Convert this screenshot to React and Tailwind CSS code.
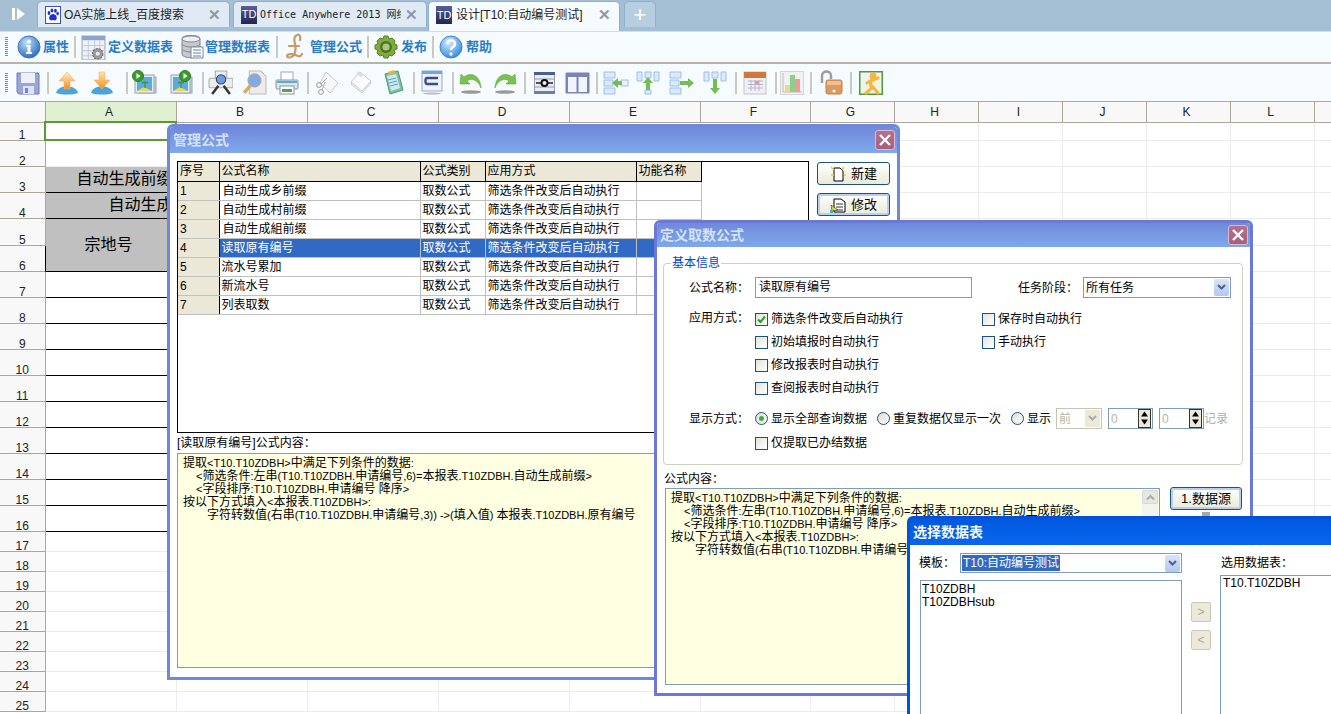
import React from 'react';

const FONT = { fontFamily: '"Liberation Sans","Noto Sans CJK SC",sans-serif' };

/* ---------- small drawings ---------- */
function Ico({ w = 24, h = 24, vb = '0 0 24 24', className = '', children }) {
  return (
    <svg width={w} height={h} viewBox={vb} className={`shrink-0 ${className}`}>
      {children}
    </svg>
  );
}

const InfoIcon = () => (
  <Ico>
    <defs>
      <radialGradient id="gi" cx="40%" cy="30%" r="75%">
        <stop offset="0" stopColor="#bfe0fb" />
        <stop offset="1" stopColor="#2466b8" />
      </radialGradient>
    </defs>
    <circle cx="12" cy="12" r="11" fill="url(#gi)" stroke="#3f78b8" />
    <circle cx="12" cy="6.5" r="2" fill="#fff" />
    <path d="M9.5 10h4v7h1.5v2H9v-2h1.5v-5h-1z" fill="#fff" />
  </Ico>
);

const TableGearIcon = () => (
  <Ico w={25} h={25}>
    <rect x="1" y="1" width="22" height="23" fill="#eef1f6" stroke="#9aa6b8" />
    <rect x="1" y="1" width="22" height="4" fill="#8fa3c8" />
    <path d="M1 10h22M1 15h22M1 20h22M7 5v19M13 5v19M18 5v19" stroke="#c3ccda" />
    <circle cx="16" cy="18" r="5" fill="#9a9a9a" stroke="#666" strokeDasharray="2 1" />
    <circle cx="16" cy="18" r="2" fill="#e8e8e8" />
  </Ico>
);

const DbIcon = () => (
  <Ico>
    <path d="M2 4c0-5 18-5 18 0v15c0 5-18 5-18 0z" fill="#c6c8cc" stroke="#85888f" />
    <ellipse cx="11" cy="4" rx="9" ry="3" fill="#eceef0" stroke="#85888f" />
    <path d="M2 9c2 4 16 4 18 0M2 14c2 4 16 4 18 0" fill="none" stroke="#85888f" />
    <rect x="11" y="12" width="12" height="11" fill="#fff" stroke="#7a8aa8" />
    <path d="M13 15h8M13 18h8M13 21h8" stroke="#5c7fb5" />
  </Ico>
);

const PoundIcon = () => (
  <Ico w={21} h={28} vb="0 0 21 28">
    <path
      d="M15 7c1-4-1-6-3-5-3 1-3 5-2 9 1 5 1 9-2 12-2 2-6 2-6 0 0-3 7-2 11 0 2 1 3 0 4-2M4 13h10"
      fill="none"
      stroke="#c99c67"
      strokeWidth="2.2"
      strokeLinecap="round"
    />
  </Ico>
);

const GearIcon = () => (
  <Ico>
    <path
      d="M10 1h4l1 3 3-1 3 3-1 3 3 1v4l-3 1 1 3-3 3-3-1-1 3h-4l-1-3-3 1-3-3 1-3-3-1v-4l3-1-1-3 3-3 3 1z"
      fill="#7fae35"
      stroke="#55802a"
    />
    <circle cx="12" cy="12" r="6" fill="#4f6f35" />
    <circle cx="12" cy="12" r="3.6" fill="#a9c97a" />
  </Ico>
);

const HelpIcon = () => (
  <Ico>
    <defs>
      <radialGradient id="gh" cx="40%" cy="30%" r="75%">
        <stop offset="0" stopColor="#d6ecff" />
        <stop offset="1" stopColor="#2b86de" />
      </radialGradient>
    </defs>
    <circle cx="12" cy="12" r="11" fill="url(#gh)" stroke="#3c86cf" />
    <path d="M8 9c0-5 8-5 8 0 0 3-4 3-4 6" fill="none" stroke="#fff" strokeWidth="2.6" />
    <circle cx="12" cy="19" r="1.7" fill="#fff" />
  </Ico>
);

const SaveIcon = () => (
  <Ico>
    <path d="M1 2h21l1 1v20H3l-2-2z" fill="#98a4dc" stroke="#7079b5" />
    <rect x="5" y="2" width="14" height="10" fill="#eef0f8" />
    <rect x="7" y="15" width="11" height="8" fill="#dfe2f2" />
    <rect x="9" y="17" width="3" height="5" fill="#7a85c5" />
  </Ico>
);

const ArrowDome = ({ down }) => (
  <Ico>
    <defs>
      <linearGradient id={down ? 'gd' : 'gu'} x1="0" y1="0" x2="0" y2="1">
        <stop offset="0" stopColor={down ? '#fde7a8' : '#fff1c9'} />
        <stop offset="1" stopColor="#f58b1f" />
      </linearGradient>
    </defs>
    <path d="M1 22c2-9 20-9 22 0-6 2-16 2-22 0z" fill="#4aa3dd" />
    <path
      d={down ? 'M9 1h6v8h5l-8 9-8-9h5z' : 'M12 1l8 9h-5v8H9v-8H4z'}
      fill={`url(#${down ? 'gd' : 'gu'})`}
      stroke="#f2b566"
      strokeWidth=".6"
    />
  </Ico>
);

const PicIcon = ({ right }) => (
  <Ico w={26} h={26} vb="0 0 26 26">
    <rect x="7" y="7" width="17" height="16" fill="#c9d2da" stroke="#99a4ad" />
    <rect x="3" y="5" width="19" height="18" fill="#e6eaee" stroke="#9aa5ae" />
    <rect x="5" y="7" width="15" height="14" fill="#55aee0" />
    <path d="M5 21l7-4 8 4z" fill="#f0d35a" />
    <path d="M13 18v-6M13 12l-3 1M13 12l3 1" stroke="#5d8a2e" strokeWidth="1.4" />
    <circle cx={right ? 17 : 6} cy="6" r="5.5" fill="#3b9c2e" stroke="#2b7a22" />
    <path d={right ? 'M15.5 3l4 3-4 3z' : 'M4.5 3l4 3-4 3z'} fill="#fff" />
  </Ico>
);

const PrintPreviewIcon = () => (
  <Ico w={25} h={25}>
    <rect x="7" y="1" width="11" height="10" fill="#f0f0f0" stroke="#aaa" />
    <rect x="1" y="8" width="23" height="9" rx="1" fill="#ececec" stroke="#aaa" />
    <path d="M4 23l6-8M21 23l-6-8" stroke="#333" strokeWidth="2.4" />
    <circle cx="12.5" cy="9" r="4.5" fill="#6b9bea" stroke="#445" />
  </Ico>
);

const FindPageIcon = () => (
  <Ico w={25} h={25}>
    <path d="M7 1h11l5 5v17H7z" fill="#ececec" stroke="#bbb" />
    <circle cx="12" cy="10" r="6" fill="#7fa8ee" stroke="#aaa" strokeWidth="1.6" />
    <path d="M8 15l-6 7" stroke="#d8a860" strokeWidth="3.2" />
  </Ico>
);

const PrinterIcon = () => (
  <Ico>
    <rect x="6" y="1" width="12" height="9" fill="#fff" stroke="#9aa" />
    <rect x="1" y="9" width="22" height="9" rx="1" fill="#dfe3e8" stroke="#8d96a0" />
    <rect x="2" y="10" width="20" height="2" fill="#4db0e0" />
    <rect x="5" y="15" width="14" height="8" fill="#fff" stroke="#8d96a0" />
    <rect x="7" y="18" width="10" height="3" fill="#57a05a" />
  </Ico>
);

const CutIcon = () => (
  <Ico>
    <path d="M11 1l12 11-8 10L5 12z" fill="#f7f7f7" stroke="#c8c8c8" />
    <circle cx="4" cy="14" r="2.4" fill="none" stroke="#999" />
    <circle cx="6" cy="21" r="2.4" fill="none" stroke="#999" />
    <path d="M6 13l6-6M7 19l3-8" stroke="#aaa" />
  </Ico>
);

const CopyIcon = () => (
  <Ico>
    <path d="M11 3l11 9-9 10L2 13z" fill="#f6f6f6" stroke="#c8c8c8" />
    <path d="M11 1l11 9-9 10L2 11z" fill="#fbfbfb" stroke="#c8c8c8" />
    <rect x="8" y="2" width="6" height="3" fill="#ddd" transform="rotate(40 11 3)" />
  </Ico>
);

const ClipIcon = () => (
  <Ico w={21} h={25} vb="0 0 21 25">
    <path d="M2 4l13-3 5 19-13 4z" fill="#7fc39a" stroke="#4a9a70" />
    <path d="M4 6l9-2 4 14-9 3z" fill="#cfe8f5" />
    <path d="M5 10l8-2M6 13l8-2M7 16l8-2" stroke="#5a9ad5" />
    <rect x="5" y="1" width="7" height="3" fill="#e2b64a" transform="rotate(-14 8 2)" />
  </Ico>
);

const WrapIcon = () => (
  <Ico w={22} h={25} vb="0 0 22 25">
    <rect x="1" y="1" width="20" height="20" fill="#eef2fa" stroke="#9aa8c8" />
    <rect x="1" y="1" width="20" height="3" fill="#6ea4ea" />
    <path d="M17 8H6c-2 0-2 6 0 6h11" fill="none" stroke="#3d4d85" strokeWidth="2.4" />
    <ellipse cx="11" cy="23.5" rx="9" ry="1" fill="#bbb" />
  </Ico>
);

const TurnIcon = ({ flip }) => (
  <Ico className={flip ? '-scale-x-100' : ''}>
    <path d="M22 17C19 8 11 7 8 10l3 3-10 0 1-10 3 3c6-5 16-3 17 11z" fill="#7cc04f" stroke="#5ea238" strokeWidth=".6" />
    <ellipse cx="12" cy="21" rx="10" ry="1.8" fill="#999" />
  </Ico>
);

const CellAIcon = () => (
  <Ico w={21} h={22} vb="0 0 21 22">
    <rect x="0" y="0" width="21" height="22" fill="#e8ecf4" stroke="#555" />
    <rect x="0" y="0" width="21" height="3" fill="#4a5f8f" />
    <rect x="0" y="19" width="21" height="3" fill="#6b7ea8" />
    <path d="M0 7h21M0 15h21" stroke="#99a" />
    <path d="M2 11h5M14 11h5" stroke="#222" strokeWidth="1.5" />
    <circle cx="10.5" cy="11" r="3" fill="none" stroke="#111" strokeWidth="2" />
  </Ico>
);

const TwoColsIcon = () => (
  <Ico w={25} h={22} vb="0 0 25 22">
    <rect x=".5" y=".5" width="24" height="21" fill="#7d83b5" rx="1" />
    <rect x="3" y="5" width="8.5" height="15" fill="#f2f4fb" />
    <rect x="13.5" y="5" width="8.5" height="15" fill="#f2f4fb" />
  </Ico>
);

const MergeIcon = ({ dir }) => {
  if (dir === 'up' || dir === 'down') {
    return (
      <Ico>
        <path d="M1 1h5v9H1zM9 1h6v6H9zM18 1h5v9h-5z" fill="#dbe9fa" stroke="#9cc0ea" />
        <path d="M9 19h6v4H9z" fill={dir === 'up' ? '#dbe9fa' : 'none'} stroke={dir === 'up' ? '#9cc0ea' : 'none'} />
        <path d={dir === 'up' ? 'M12 6l5 6h-3v7h-4v-7H7z' : 'M10 8h4v9h3l-5 6-5-6h3z'} fill="#73bd55" />
      </Ico>
    );
  }
  return (
    <Ico w={26} h={24} vb="0 0 26 24">
      <path d="M1 1h11v6H1zM1 9h9v6H1zM1 17h11v6H1z" fill="#dbe9fa" stroke="#9cc0ea" />
      {dir === 'left' && <path d="M18 9h7v6h-7z" fill="#eaf2fc" stroke="#9cc0ea" />}
      <path d={dir === 'left' ? 'M9 12l6-5v3h4v4h-4v3z' : 'M11 10h8V7l6 5-6 5v-3h-8z'} fill="#73bd55" />
    </Ico>
  );
};

const CalendarIcon = () => (
  <Ico>
    <rect x="1" y="1" width="22" height="22" fill="#f0f0f2" stroke="#c4c4c8" />
    <rect x="1" y="1" width="22" height="6" fill="#d2763a" />
    <path d="M5 10h15M5 13.5h15M5 17h15M8 9v11M12 9v11M16 9v11" stroke="#b3b8d6" />
    <rect x="12" y="10" width="4" height="3.5" fill="#ee9a80" />
  </Ico>
);

const ChartIcon = () => (
  <Ico>
    <rect x=".5" y=".5" width="23" height="23" fill="#f2f2f2" stroke="#d5d5d5" />
    <path d="M3 2v19h19" stroke="#bbb" fill="none" />
    <rect x="5" y="14" width="5" height="7" fill="#f3d48c" />
    <rect x="10" y="4" width="5" height="17" fill="#8bd08b" />
    <rect x="15" y="8" width="5" height="13" fill="#ee9a9a" />
  </Ico>
);

const LockIcon = () => (
  <Ico w={23} h={25} vb="0 0 23 25">
    <path d="M2 13V6c0-6 9-6 9 0v3" fill="none" stroke="#9c9c9c" strokeWidth="2.4" />
    <rect x="6" y="10" width="16" height="14" rx="2" fill="#dd9a5e" stroke="#c47f45" />
    <rect x="7" y="11" width="14" height="4" rx="1" fill="#f0c094" />
    <circle cx="14" cy="21" r="1.5" fill="#fff" />
  </Ico>
);

const RunnerIcon = () => (
  <Ico>
    <rect x=".5" y=".5" width="23" height="23" fill="#eef4ec" stroke="#4f9a3d" strokeWidth="2" />
    <circle cx="14" cy="5" r="3.4" fill="#f5b83c" />
    <path d="M13 8c-2 4-2 7 0 9l-6 5M13 15l6 7M13 9l-5 3M14 9l5-2" fill="none" stroke="#f5b83c" strokeWidth="3.2" strokeLinecap="round" />
  </Ico>
);

const Sep = ({ className }) => <span className={`block w-[2px] h-[22px] bg-[#c9c9c0] shrink-0 ${className}`} />;

const Grip = ({ className }) => (
  <span className={`block w-[3px] h-[20px] shrink-0 bg-[repeating-linear-gradient(to_bottom,#8a8a70_0,#8a8a70_1px,transparent_1px,transparent_2px)] ${className}`} />
);

/* ---------- top bars ---------- */
function Tab({ active, icon, mono, w, children }) {
  return (
    <div
      className={`relative flex items-center shrink-0 rounded-t-[5px] border border-b-0 border-[#8fb0cb] pl-[7px] ${w} ${
        active ? 'h-[30px] bg-[#f5fbff] pb-[3px]' : 'h-[26px] bg-[#dfeaf5]'
      }`}
    >
      {icon}
      <span className={`ml-[3px] whitespace-nowrap overflow-hidden text-[#222] ${mono ? 'w-[141px] text-[10px]' : 'text-[12px]'}`} style={mono ? { fontFamily: '"DejaVu Sans Mono","Noto Sans CJK SC",monospace' } : undefined}>
        {children}
      </span>
      <span className="absolute right-[8px] top-[5px] text-[15px] leading-[15px] font-bold text-[#8b98a5]">✕</span>
    </div>
  );
}

const PawBadge = () => (
  <Ico w={16} h={18} vb="0 0 16 18">
    <rect x=".5" y=".5" width="15" height="17" fill="#fff" stroke="#3a50c8" />
    <g fill="#1f2fd0">
      <ellipse cx="4" cy="7" rx="1.4" ry="2" />
      <ellipse cx="7" cy="4.6" rx="1.4" ry="2" />
      <ellipse cx="10.4" cy="4.8" rx="1.4" ry="2" />
      <ellipse cx="12.6" cy="7.6" rx="1.3" ry="1.8" />
      <path d="M8 8c-3 0-5 4-3 6 1 1 2 0 3 0s2 1 3 0c2-2 0-6-3-6z" />
    </g>
  </Ico>
);

const TdBadge = () => (
  <span className="flex items-center justify-center w-[16px] h-[18px] shrink-0 bg-gradient-to-b from-[#5a5f9a] to-[#20264f] text-[11px] leading-none text-white">TD</span>
);

function TabBar() {
  return (
    <div className="flex items-start h-[31px] pt-px bg-[#a4bed4] shrink-0">
      <div className="flex items-center justify-center w-[37px] h-[26px] text-white">
        <Ico w={16} h={16} vb="0 0 16 16">
          <path d="M1 2h3v12H1zM6 2l8 6-8 6z" fill="#fff" />
        </Ico>
      </div>
      <Tab icon={<PawBadge />} w="w-[193px]">OA实施上线_百度搜索</Tab>
      <div className="w-[3px]" />
      <Tab icon={<TdBadge />} mono w="w-[194px]">Office Anywhere 2013 网络</Tab>
      <div className="w-px" />
      <Tab active icon={<TdBadge />} w="w-[192px]">
        <span className="ml-px">设计[T10:自动编号测试]</span>
      </Tab>
      <div className="flex items-center justify-center w-[32px] h-[26px] ml-[4px] rounded-t-[5px] border border-b-0 border-[#8fb0cb] bg-[#b7cde0] text-[22px] leading-none text-white">+</div>
    </div>
  );
}

function MenuItem({ icon, iconClass, label, labelClass }) {
  return (
    <>
      <span className={iconClass}>{icon}</span>
      <span className={`text-[13px] font-bold text-[#2a7bc8] whitespace-nowrap ${labelClass}`}>{label}</span>
    </>
  );
}

function MenuBar() {
  return (
    <div className="flex items-center h-[33px] shrink-0 border-t border-b-2 border-t-[#dcdcdc] border-b-[#b5b5ac] bg-[#f5fbff] pl-[5px]">
      <Grip />
      <MenuItem icon={<InfoIcon />} iconClass="ml-[9px]" label="属性" labelClass="ml-[2px]" />
      <Sep className="ml-[5px]" />
      <MenuItem icon={<TableGearIcon />} iconClass="ml-[5px]" label="定义数据表" labelClass="ml-[2px]" />
      <MenuItem icon={<DbIcon />} iconClass="ml-[7px]" label="管理数据表" labelClass="ml-[1px]" />
      <Sep className="ml-[6px]" />
      <MenuItem icon={<PoundIcon />} iconClass="ml-[7px]" label="管理公式" labelClass="ml-[4px]" />
      <Sep className="ml-[5px]" />
      <MenuItem icon={<GearIcon />} iconClass="ml-[5px]" label="发布" labelClass="ml-[3px]" />
      <Sep className="ml-[5px]" />
      <MenuItem icon={<HelpIcon />} iconClass="ml-[5px]" label="帮助" labelClass="ml-[3px]" />
    </div>
  );
}

function ToolBar() {
  return (
    <div className="flex items-center h-[38px] shrink-0 border-b border-[#aca899] bg-[#f5fbff] pl-[5px]">
      <Grip />
      <span className="ml-[8px]"><SaveIcon /></span>
      <Sep className="ml-[7px]" />
      <span className="ml-[6px]"><ArrowDome /></span>
      <span className="ml-[11px]"><ArrowDome down /></span>
      <Sep className="ml-[12px]" />
      <span className="ml-[4px]"><PicIcon /></span>
      <span className="ml-[10px]"><PicIcon right /></span>
      <Sep className="ml-[8px]" />
      <span className="ml-[4px]"><PrintPreviewIcon /></span>
      <span className="ml-[9px]"><FindPageIcon /></span>
      <span className="ml-[8px]"><PrinterIcon /></span>
      <Sep className="ml-[8px]" />
      <span className="ml-[6px]"><CutIcon /></span>
      <span className="ml-[10px]"><CopyIcon /></span>
      <span className="ml-[10px]"><ClipIcon /></span>
      <Sep className="ml-[9px]" />
      <span className="ml-[6px]"><WrapIcon /></span>
      <Sep className="ml-[9px]" />
      <span className="ml-[5px]"><TurnIcon /></span>
      <span className="ml-[10px]"><TurnIcon flip /></span>
      <Sep className="ml-[7px]" />
      <span className="ml-[8px]"><CellAIcon /></span>
      <span className="ml-[10px]"><TwoColsIcon /></span>
      <Sep className="ml-[6px]" />
      <span className="ml-[5px]"><MergeIcon dir="left" /></span>
      <span className="ml-[7px]"><MergeIcon dir="up" /></span>
      <span className="ml-[9px]"><MergeIcon dir="right" /></span>
      <span className="ml-[8px]"><MergeIcon dir="down" /></span>
      <Sep className="ml-[8px]" />
      <span className="ml-[6px]"><CalendarIcon /></span>
      <Sep className="ml-[8px]" />
      <span className="ml-[3px]"><ChartIcon /></span>
      <Sep className="ml-[6px]" />
      <span className="ml-[8px]"><LockIcon /></span>
      <Sep className="ml-[7px]" />
      <span className="ml-[7px]"><RunnerIcon /></span>
    </div>
  );
}

/* ---------- spreadsheet behind the windows ---------- */
const COLS = ['A', 'B', 'C', 'D', 'E', 'F', 'G', 'H', 'I', 'J', 'K', 'L'];
const ROWS = Array.from({ length: 25 }, (_, i) => i + 1);

const cellLine = 'border border-[#ececec]';
const rowHead = 'border border-l-0 border-[#aca899] bg-[#f8f8f8] text-center align-bottom text-[12px] leading-[10px] text-[#222]';

function mergedCell(n) {
  if (n === 3) return <td colSpan={2} className="border border-black bg-[#c0c0c0] pl-[31px] text-[16px] whitespace-nowrap overflow-hidden">自动生成前缀</td>;
  if (n === 4) return <td colSpan={2} className="border border-black bg-[#c0c0c0] pl-[63px] text-[16px] whitespace-nowrap overflow-hidden">自动生成</td>;
  if (n === 5) return <td colSpan={2} rowSpan={2} className="border border-black bg-[#c0c0c0] pl-[39px] text-[16px]">宗地号</td>;
  if (n === 6) return null;
  return <td colSpan={2} className="border border-black" />;
}

function rowHeight(n) {
  if (n === 1) return 'h-[18px]';
  if (n === 5) return 'h-[27px]';
  return n <= 16 ? 'h-[26px]' : 'h-[20px]';
}

function Sheet() {
  return (
    <table className="table-fixed border-collapse w-[1331px] text-black">
      <colgroup>
        <col className="w-[45px]" />
        <col className="w-[131px]" />
        <col className="w-[131px]" />
        <col className="w-[131px]" />
        <col className="w-[131px]" />
        <col className="w-[131px]" />
        <col className="w-[110px]" />
        <col className="w-[84px]" />
        <col className="w-[84px]" />
        <col className="w-[84px]" />
        <col className="w-[84px]" />
        <col className="w-[84px]" />
        <col className="w-[84px]" />
        <col className="w-[17px]" />
      </colgroup>
      <tbody>
        <tr className="h-[20px]">
          <td className="border border-t-0 border-l-0 border-[#aca899] bg-[#f8f8f8]" />
          {COLS.map((c) => (
            <td
              key={c}
              className={`border border-t-0 border-[#aca899] pr-[3px] text-center text-[12px] text-[#222] ${c === 'A' ? 'bg-[#e0f0d0]' : 'bg-[#f8f8f8]'}`}
            >
              {c}
            </td>
          ))}
          <td className="border border-t-0 border-[#aca899] bg-[#f8f8f8]" />
        </tr>
        {ROWS.map((n) => (
          <tr key={n} className={rowHeight(n)}>
            <td className={`${rowHead} ${n === 1 ? 'bg-[#e0f0d0]' : ''}`}>{n}</td>
            {n === 1 ? (
              <>
                <td className="border-2 border-[#5a9a32]" />
                <td className={cellLine} />
              </>
            ) : n === 2 || n > 16 ? (
              <>
                <td className={cellLine} />
                <td className={cellLine} />
              </>
            ) : (
              mergedCell(n)
            )}
            {COLS.slice(2).map((c) => (
              <td key={c} className={cellLine} />
            ))}
            <td className={cellLine} />
          </tr>
        ))}
      </tbody>
    </table>
  );
}

/* ---------- dialog parts ---------- */
function CloseBtn() {
  return (
    <span className="flex items-center justify-center w-[20px] h-[20px] rounded-[3px] border border-[#d6bcd0] bg-gradient-to-b from-[#b8708a] to-[#a85f7c]">
      <Ico w={12} h={12} vb="0 0 12 12">
        <path d="M1 1l10 10M11 1L1 11" stroke="#fff" strokeWidth="2.4" />
      </Ico>
    </span>
  );
}

function TitleBar({ title, h, xp }) {
  return (
    <div className={`flex items-center justify-between shrink-0 pl-[3px] pr-[2px] ${h} ${xp ? 'bg-gradient-to-b from-[#0058e0] to-[#0a66ee]' : 'bg-gradient-to-b from-[#7089dc] to-[#7fa8ea]'}`}>
      <span className={`text-[14px] font-bold ${xp ? 'text-[#f2f6ff]' : 'text-[#d4e2f8]'}`}>{title}</span>
      {!xp && <CloseBtn />}
    </div>
  );
}

function XpButton({ icon, children, className = '' }) {
  return (
    <button className={`flex items-center justify-center gap-[5px] rounded-[3px] border border-[#1c5180] bg-gradient-to-b from-white to-[#ece9d8] text-[13px] text-black ${className}`}>
      {icon}
      {children}
    </button>
  );
}

const NewDocIcon = () => (
  <Ico w={16} h={16} vb="0 0 16 16">
    <path d="M4 2h6l3 3v10H4z" fill="#fff" stroke="#000" />
    <path d="M1 1l3 3M14 1l-2 3M1 9h3M14 9h2" stroke="#f0d020" strokeWidth="1.4" />
  </Ico>
);

const EditDocIcon = () => (
  <Ico w={16} h={16} vb="0 0 16 16">
    <path d="M4 2h7l4 3v10H4z" fill="#fff" stroke="#000" />
    <path d="M6 7h7M6 10h7M6 13h7" stroke="#333" />
    <path d="M1 8l7 5-6 1z" fill="#f0d020" stroke="#333" strokeWidth=".6" />
    <path d="M0 13h3v3H0z" fill="#40b0d0" />
  </Ico>
);

const Chk = ({ checked }) => (
  <span className="flex items-center justify-center w-[13px] h-[13px] shrink-0 border border-[#1c5180] bg-gradient-to-br from-[#e4e3da] to-white">
    {checked && (
      <Ico w={9} h={9} vb="0 0 9 9">
        <path d="M1 4.5l2.5 2.5L8 1.5" fill="none" stroke="#21a121" strokeWidth="2" />
      </Ico>
    )}
  </span>
);

const Radio = ({ on }) => (
  <span className="flex items-center justify-center w-[13px] h-[13px] shrink-0 rounded-full border border-[#1c5180] bg-gradient-to-br from-[#dcdcd4] to-white">
    {on && <span className="block w-[5px] h-[5px] rounded-full bg-[#3fae3f]" />}
  </span>
);

const DropArrow = () => (
  <span className="flex items-center justify-center w-[15px] h-[17px] rounded-[2px] bg-gradient-to-b from-[#d8e4fb] to-[#b1c8f2]">
    <Ico w={9} h={7} vb="0 0 9 7">
      <path d="M1 1l3.5 3.5L8 1" fill="none" stroke="#4d6185" strokeWidth="2" />
    </Ico>
  </span>
);

const Spin = () => (
  <div className="flex items-center justify-between w-[45px] h-[21px] border border-[#7f9db9] bg-white pl-[2px] pr-px text-[12px] text-[#b4b4a8]">
    0
    <span className="flex flex-col w-[13px] h-[19px] border border-[#333] bg-[#ece9d8]">
      <Ico w={11} h={8} vb="0 0 11 8"><path d="M5.5 1.5l3.5 5H2z" fill="#000" /></Ico>
      <Ico w={11} h={8} vb="0 0 11 8"><path d="M5.5 6.5l3.5-5H2z" fill="#000" /></Ico>
    </span>
  </div>
);

const Opt = ({ w, checked, children }) => (
  <label className={`flex items-center gap-[3px] whitespace-nowrap ${w}`}>
    <Chk checked={checked} />
    {children}
  </label>
);

// latin runs in the formula are a size smaller than the chinese around them
const L = ({ children }) => <span className="text-[11px]">{children}</span>;

function FormulaText() {
  return (
    <div className="text-[12px] leading-[13px] text-black whitespace-nowrap">
      <div>提取<L>&lt;T10.T10ZDBH&gt;</L>中满足下列条件的数据<L>:</L></div>
      <div className="pl-[13px]"><L>&lt;</L>筛选条件<L>:</L>左串<L>(T10.T10ZDBH.</L>申请编号<L>,6)=</L>本报表<L>.T10ZDBH.</L>自动生成前缀<L>&gt;</L></div>
      <div className="pl-[13px]"><L>&lt;</L>字段排序<L>:T10.T10ZDBH.</L>申请编号 降序<L>&gt;</L></div>
      <div>按以下方式填入<L>&lt;</L>本报表<L>.T10ZDBH&gt;:</L></div>
      <div className="pl-[24px]">字符转数值<L>(</L>右串<L>(T10.T10ZDBH.</L>申请编号<L>,3)) -&gt;(</L>填入值<L>) </L>本报表<L>.T10ZDBH.</L>原有编号</div>
    </div>
  );
}

/* ---------- 管理公式 ---------- */
const FORMULAS = [
  ['自动生成乡前缀', 1],
  ['自动生成村前缀', 1],
  ['自动生成組前缀', 1],
  ['读取原有编号', 0],
  ['流水号累加', 0],
  ['新流水号', 0],
  ['列表取数', 0],
];

const thCls = 'border border-black bg-[#ebe8d8] pl-[2px] text-left font-normal whitespace-nowrap';

function ManageWindow() {
  return (
    <div className="absolute left-[167px] top-[124px] flex flex-col w-[733px] h-[556px] rounded-t-[6px] border-[3px] border-[#7088dc] bg-white overflow-hidden text-[12px]">
      <TitleBar title="管理公式" h="h-[26px]" />
      <div className="flex gap-[8px] pl-[7px] pt-[8px]">
        <div className="w-[632px] h-[272px] border border-black bg-white">
          <table className="table-fixed border-collapse w-[523px] leading-[18px]">
            <colgroup>
              <col className="w-[41px]" />
              <col className="w-[201px]" />
              <col className="w-[65px]" />
              <col className="w-[151px]" />
              <col className="w-[65px]" />
            </colgroup>
            <tbody>
              <tr className="h-[19px]">
                <td className={`${thCls} border-t-0 border-l-0`}>序号</td>
                <td className={`${thCls} border-t-0`}>公式名称</td>
                <td className={`${thCls} border-t-0`}>公式类别</td>
                <td className={`${thCls} border-t-0`}>应用方式</td>
                <td className={`${thCls} border-t-0`}>功能名称</td>
              </tr>
              {FORMULAS.map(([name, indent], i) => {
                const sel = i === 3;
                const td = `border border-[#c0c0c0] pl-[2px] whitespace-nowrap overflow-hidden ${sel ? 'bg-[#316ac5] text-white' : ''}`;
                return (
                  <tr key={name} className="h-[19px]">
                    <td className="border border-l-0 border-[#c0c0c0] border-r-black bg-[#ebe8d8] pl-[2px]">{i + 1}</td>
                    <td className={`${td} ${indent ? 'pl-[3px]' : ''}`}>{name}</td>
                    <td className={td}>取数公式</td>
                    <td className={td}>筛选条件改变后自动执行</td>
                    <td className={td} />
                  </tr>
                );
              })}
            </tbody>
          </table>
        </div>
        <div className="flex flex-col gap-[8px] pt-px">
          <XpButton icon={<NewDocIcon />} className="w-[73px] h-[23px]">新建</XpButton>
          <XpButton icon={<EditDocIcon />} className="w-[73px] h-[23px] shadow-[inset_0_0_0_2px_#b8d0f0]">修改</XpButton>
        </div>
      </div>
      <div className="pl-[7px] mt-[2px] h-[18px] leading-[17px] text-black">[读取原有编号]公式内容：</div>
      <div className="ml-[7px] w-[713px] h-[215px] border border-[#7f9db9] bg-[#ffffe1] pl-[5px] pt-[3px]">
        <FormulaText />
      </div>
    </div>
  );
}

/* ---------- 定义取数公式 ---------- */
function DefineWindow() {
  return (
    <div className="absolute left-[654px] top-[220px] flex flex-col w-[599px] h-[476px] rounded-t-[6px] border-[3px] border-[#6a78d8] bg-white overflow-hidden text-[12px] text-black">
      <TitleBar title="定义取数公式" h="h-[24px]" />
      <fieldset className="ml-[6px] mt-[9px] w-[580px] h-[209px] rounded-[4px] border border-[#d0d0bf]">
        <legend className="ml-[7px] px-px text-[12px] leading-[14px] text-[#0046d5]">基本信息</legend>
        <div className="flex items-center h-[21px] mt-[7px] pl-[25px]">
          <span className="w-[66px]">公式名称：</span>
          <div className="w-[217px] h-[21px] border border-[#7f9db9] pl-[3px] leading-[19px]">读取原有编号</div>
          <span className="ml-[46px] w-[65px]">任务阶段：</span>
          <div className="flex items-center justify-between w-[148px] h-[21px] border border-[#7f9db9] pl-[2px] pr-px">
            所有任务
            <DropArrow />
          </div>
        </div>
        <div className="flex mt-[12px] pl-[25px]">
          <span className="w-[66px] leading-[17px]">应用方式：</span>
          <div className="flex flex-col gap-[5px] w-[227px]">
            <Opt w="h-[18px]" checked>筛选条件改变后自动执行</Opt>
            <Opt w="h-[18px]">初始填报时自动执行</Opt>
            <Opt w="h-[18px]">修改报表时自动执行</Opt>
            <Opt w="h-[18px]">查阅报表时自动执行</Opt>
          </div>
          <div className="flex flex-col gap-[5px]">
            <Opt w="h-[18px]">保存时自动执行</Opt>
            <Opt w="h-[18px]">手动执行</Opt>
          </div>
        </div>
        <div className="flex items-center h-[21px] mt-[11px] pl-[25px]">
          <span className="w-[66px]">显示方式：</span>
          <label className="flex items-center gap-[3px] w-[122px]"><Radio on />显示全部查询数据</label>
          <label className="flex items-center gap-[3px] w-[134px] whitespace-nowrap"><Radio />重复数据仅显示一次</label>
          <label className="flex items-center gap-[3px] w-[45px]"><Radio />显示</label>
          <div className="flex items-center justify-between w-[46px] h-[21px] border border-[#c4c4b4] bg-white pl-[2px] pr-px text-[#b4b4a8]">
            前
            <span className="flex items-center justify-center w-[15px] h-[17px] bg-[#ece9d8]">
              <Ico w={9} h={7} vb="0 0 9 7"><path d="M1 1l3.5 3.5L8 1" fill="none" stroke="#aaa" strokeWidth="2" /></Ico>
            </span>
          </div>
          <div className="w-[6px]" />
          <Spin />
          <div className="w-[6px]" />
          <Spin />
          <span className="text-[#b0b0a4]">记录</span>
        </div>
        <div className="mt-[5px] pl-[91px]">
          <Opt w="h-[18px]">仅提取已办结数据</Opt>
        </div>
      </fieldset>
      <div className="ml-[7px] mt-[6px] h-[17px] leading-[17px]">公式内容：</div>
      <div className="flex">
        <div className="relative ml-[8px] w-[495px] h-[197px] border border-[#7f9db9] bg-[#ffffe1] pl-[5px] pt-[3px] overflow-hidden">
          <FormulaText />
          <div className="absolute right-px top-px w-[16px] h-[32px] bg-[#f4f4ee]">
            <span className="flex items-center justify-center h-[14px] rounded-[2px] border border-[#d0d8e8] bg-[#e6e8dc]">
              <Ico w={9} h={7} vb="0 0 9 7"><path d="M1 5.5L4.5 2 8 5.5" fill="none" stroke="#a8acb0" strokeWidth="2" /></Ico>
            </span>
          </div>
        </div>
        <div className="flex flex-col items-center ml-[10px] -mt-px w-[72px]">
          <XpButton className="w-[72px] h-[23px] shadow-[inset_0_0_0_2px_#b8d0f0] text-[12px]">1.数据源</XpButton>
          <span className="block w-[8px] h-[5px] mt-[2px] bg-[#a8a8a8]" />
        </div>
      </div>
    </div>
  );
}

/* ---------- 选择数据表 ---------- */
function PickWindow() {
  return (
    <div className="absolute left-[907px] top-[516px] flex flex-col w-[440px] h-[220px] border-[3px] border-[#0052d9] rounded-t-[6px] bg-white text-[12px] text-black">
      <TitleBar title="选择数据表" h="h-[26px]" xp />
      <div className="flex pl-[10px] pt-[8px]">
        <div className="w-[262px] shrink-0">
          <div className="flex items-center justify-between h-[20px]">
            <span className="-ml-px">模板：</span>
            <div className="flex items-center justify-between w-[222px] h-[20px] border border-[#7f9db9] pl-px pr-px">
              <span className="bg-[#316ac5] text-white px-px leading-[16px]">T10:自动编号测试</span>
              <DropArrow />
            </div>
          </div>
          <div className="mt-[7px] h-[150px] border border-[#7f9db9] pl-px pt-[2px] leading-[13px]">
            <div>T10ZDBH</div>
            <div>T10ZDBHsub</div>
          </div>
        </div>
        <div className="flex flex-col items-center gap-[8px] w-[38px] shrink-0 pt-[49px]">
          <span className="flex items-center justify-center w-[20px] h-[20px] rounded-[2px] border border-[#c8c8b8] bg-[#ece9d8] text-[#aaa89a]">&gt;</span>
          <span className="flex items-center justify-center w-[20px] h-[20px] rounded-[2px] border border-[#c8c8b8] bg-[#ece9d8] text-[#aaa89a]">&lt;</span>
        </div>
        <div className="w-[130px] shrink-0">
          <div className="h-[20px] leading-[20px] pl-px">选用数据表：</div>
          <div className="mt-[2px] h-[150px] border border-[#7f9db9] pl-[2px] leading-[14px]">T10.T10ZDBH</div>
        </div>
      </div>
    </div>
  );
}

export default function App() {
  return (
    <div className="relative flex flex-col w-[1331px] h-[714px] overflow-hidden bg-white" style={FONT}>
      <TabBar />
      <MenuBar />
      <ToolBar />
      <Sheet />
      <ManageWindow />
      <DefineWindow />
      <PickWindow />
    </div>
  );
}
